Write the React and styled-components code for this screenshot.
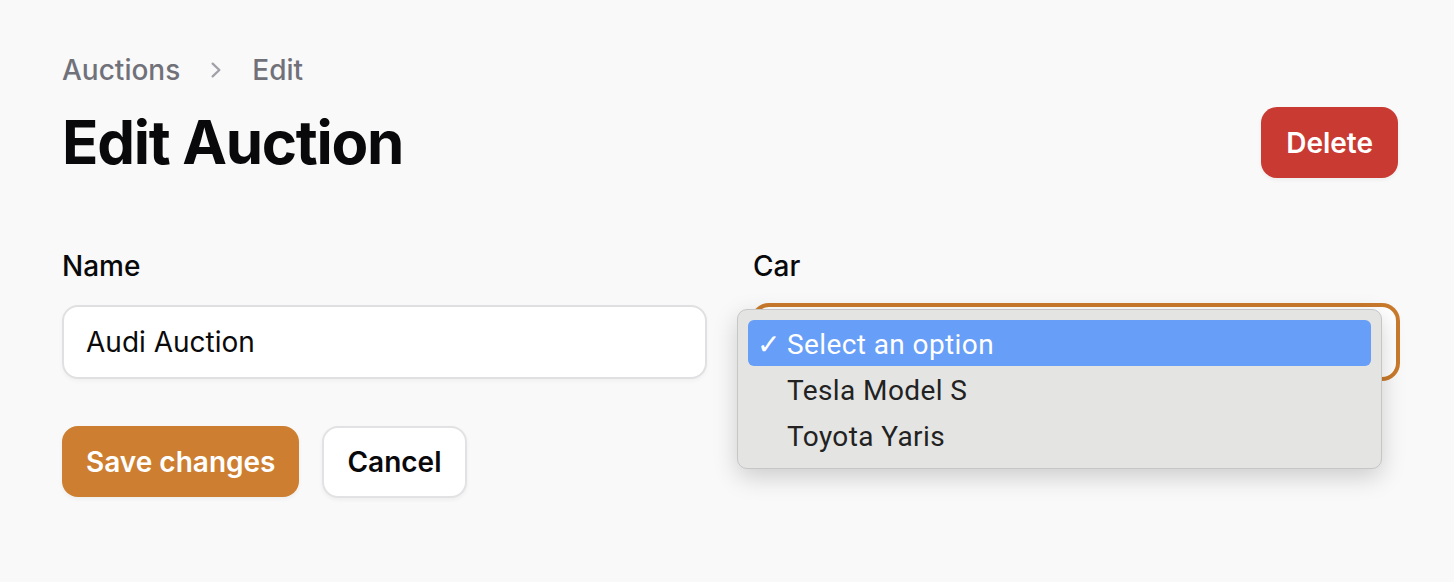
import React from 'react'
import styled, { createGlobalStyle } from 'styled-components'

const GlobalStyle = createGlobalStyle`
  html, body {
    margin: 0;
    padding: 0;
    background: #f9f9f9;
  }
  body {
    font-family: Inter, "Noto Sans", sans-serif;
    color: #0a0a0b;
  }
`

const Page = styled.div`
  box-sizing: border-box;
  width: 1454px;
  height: 582px;
  padding: 50px 56px 0 62px;
  overflow: hidden;
`

const Header = styled.div`
  display: flex;
  justify-content: space-between;
  align-items: flex-end;
`

const HeaderText = styled.div`
  display: flex;
  flex-direction: column;
  gap: 16px;
`

const Breadcrumbs = styled.nav`
  display: flex;
  align-items: center;
  gap: 22px;
  font-size: 28px;
  line-height: 40px;
  font-weight: 500;
  color: #71717a;
`

const Crumb = styled.span`
  color: #71717a;
`

const Chevron = styled.svg`
  width: 30px;
  height: 30px;
  margin: 0 -1px;
  color: #a1a1aa;
`

const Title = styled.h1`
  margin: 0;
  font-size: 60px;
  line-height: 72px;
  font-weight: 700;
  letter-spacing: -1.3px;
  color: #09090b;
`

const Button = styled.button`
  box-sizing: border-box;
  height: ${({ tall }) => (tall ? '72px' : '71px')};
  padding: 0 ${({ pad }) => pad || 24}px;
  border-radius: 16px;
  border: ${({ variant }) => (variant === 'outline' ? '2px solid #e2e2e4' : 'none')};
  background: ${({ variant }) =>
    variant === 'danger' ? '#c93a32' : variant === 'primary' ? '#cd7e30' : '#ffffff'};
  color: ${({ variant }) => (variant === 'outline' ? '#09090b' : '#ffffff')};
  font-family: Inter, sans-serif;
  font-size: 28px;
  font-weight: 600;
  box-shadow: 0 2px 4px rgba(0, 0, 0, 0.05);
  cursor: pointer;
`

const Form = styled.div`
  display: grid;
  grid-template-columns: 1fr 1fr;
  column-gap: 46px;
  margin-top: 68px;
`

const Field = styled.div`
  display: flex;
  flex-direction: column;
  gap: 19px;
`

const Label = styled.label`
  font-size: 28px;
  line-height: 40px;
  font-weight: 500;
  color: #09090b;
`

const InputBox = styled.div`
  box-sizing: border-box;
  position: relative;
  height: 74px;
  border-radius: 16px;
  background: #ffffff;
  border: 2px solid ${({ focused }) => (focused ? '#c97a2c' : '#e0e0e2')};
  box-shadow: ${({ focused }) =>
    focused ? '0 0 0 2px #c97a2c' : '0 2px 4px rgba(0, 0, 0, 0.04)'};
  display: flex;
  align-items: center;
  padding: 0 22px;
  font-size: 28px;
  color: #0a0a0b;
`

const Popup = styled.div`
  box-sizing: border-box;
  position: absolute;
  left: -18px;
  top: 2px;
  width: 645px;
  padding: 10px;
  background: #e4e4e3;
  border: 1px solid #c6c6c6;
  border-radius: 10px;
  box-shadow: 0 8px 24px rgba(0, 0, 0, 0.18);
  z-index: 10;
`

const Option = styled.div`
  display: flex;
  align-items: center;
  height: 46px;
  padding-left: 9px;
  padding-top: 2px;
  box-sizing: border-box;
  border-radius: 6px;
  background: ${({ selected }) => (selected ? '#679ef7' : 'transparent')};
  color: ${({ selected }) => (selected ? '#ffffff' : '#222222')};
  font-family: Roboto, "Liberation Sans", sans-serif;
  font-size: 28px;
  letter-spacing: 0.4px;
`

const Check = styled.span`
  width: 30px;
  font-size: 28px;
  font-weight: 400;
`

const Actions = styled.div`
  display: flex;
  gap: 23px;
  margin-top: 47px;
`

const options = ['Select an option', 'Tesla Model S', 'Toyota Yaris']

export default function App() {
  return (
    <Page>
      <GlobalStyle />
      <Header>
        <HeaderText>
          <Breadcrumbs>
            <Crumb>Auctions</Crumb>
            <Chevron viewBox="0 0 20 20" fill="currentColor">
              <path
                fillRule="evenodd"
                d="M7.21 14.77a.75.75 0 01.02-1.06L11.168 10 7.23 6.29a.75.75 0 111.04-1.08l4.5 4.25a.75.75 0 010 1.08l-4.5 4.25a.75.75 0 01-1.06-.02z"
                clipRule="evenodd"
              />
            </Chevron>
            <Crumb>Edit</Crumb>
          </Breadcrumbs>
          <Title>Edit Auction</Title>
        </HeaderText>
        <Button variant="danger" pad={25}>Delete</Button>
      </Header>

      <Form>
        <Field>
          <Label>Name</Label>
          <InputBox>Audi Auction</InputBox>
        </Field>
        <Field>
          <Label>Car</Label>
          <InputBox focused>
            <Popup>
              {options.map((o, i) => (
                <Option key={o} selected={i === 0}>
                  <Check>{i === 0 ? '✓' : ''}</Check>
                  {o}
                </Option>
              ))}
            </Popup>
          </InputBox>
        </Field>
      </Form>

      <Actions>
        <Button variant="primary">Save changes</Button>
        <Button variant="outline" tall pad={23}>Cancel</Button>
      </Actions>
    </Page>
  )
}
